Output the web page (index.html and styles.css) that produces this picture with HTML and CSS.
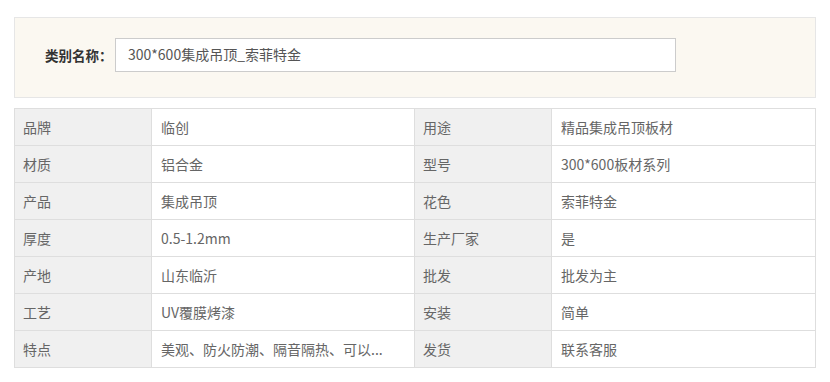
FILE: index.html
```html
<!DOCTYPE html>
<html lang="zh-CN">
<head>
<meta charset="utf-8">
<title>产品参数</title>
<link rel="stylesheet" href="styles.css">
</head>
<body>
<div class="page">
  <div class="name-box">
    <span class="name-label">类别名称：</span>
    <div class="name-input">300*600集成吊顶_索菲特金</div>
  </div>
  <div class="spec">
    <div class="k">品牌</div><div class="v">临创</div><div class="k">用途</div><div class="v">精品集成吊顶板材</div>
    <div class="k">材质</div><div class="v">铝合金</div><div class="k">型号</div><div class="v">300*600板材系列</div>
    <div class="k">产品</div><div class="v">集成吊顶</div><div class="k">花色</div><div class="v">索菲特金</div>
    <div class="k">厚度</div><div class="v">0.5-1.2mm</div><div class="k">生产厂家</div><div class="v">是</div>
    <div class="k">产地</div><div class="v">山东临沂</div><div class="k">批发</div><div class="v">批发为主</div>
    <div class="k">工艺</div><div class="v">UV覆膜烤漆</div><div class="k">安装</div><div class="v">简单</div>
    <div class="k">特点</div><div class="v">美观、防火防潮、隔音隔热、可以...</div><div class="k">发货</div><div class="v">联系客服</div>
  </div>
</div>
</body>
</html>
```
FILE: styles.css
```css
* { box-sizing: border-box; }
html, body { margin: 0; padding: 0; background: #fff; }
body {
  font-family: "Microsoft YaHei", "Noto Sans CJK SC", "Noto Sans", sans-serif;
  font-size: 14px;
  color: #666;
}
.page {
  padding: 17px 14px 0 15px;
  width: 830px;
  padding-left: 14px;
}
.name-box {
  width: 802px;
  height: 81px;
  background: #fbf8f1;
  border: 1px solid #e6e6e6;
  display: flex;
  align-items: flex-start;
  padding: 20px 0 0 30px;
}
.name-label {
  font-size: 13.5px;
  font-weight: bold;
  color: #333;
  line-height: 34px;
  width: 70px;
}
.name-input {
  width: 561px;
  height: 34px;
  background: #fff;
  border: 1px solid #ccc;
  padding-left: 12px;
  line-height: 31px;
  color: #555;
}
.spec {
  margin-top: 10px;
  width: 802px;
  display: grid;
  grid-template-columns: 136px 262px 136px 263px;
  grid-auto-rows: 36px;
  gap: 1px;
  padding: 1px;
  background: #dedede;
}
.spec > div {
  display: flex;
  align-items: center;
  line-height: 20px;
}
.k {
  background: #f0f0f0;
  padding-left: 8px;
}
.v {
  background: #fff;
  padding-left: 9px;
}
```
